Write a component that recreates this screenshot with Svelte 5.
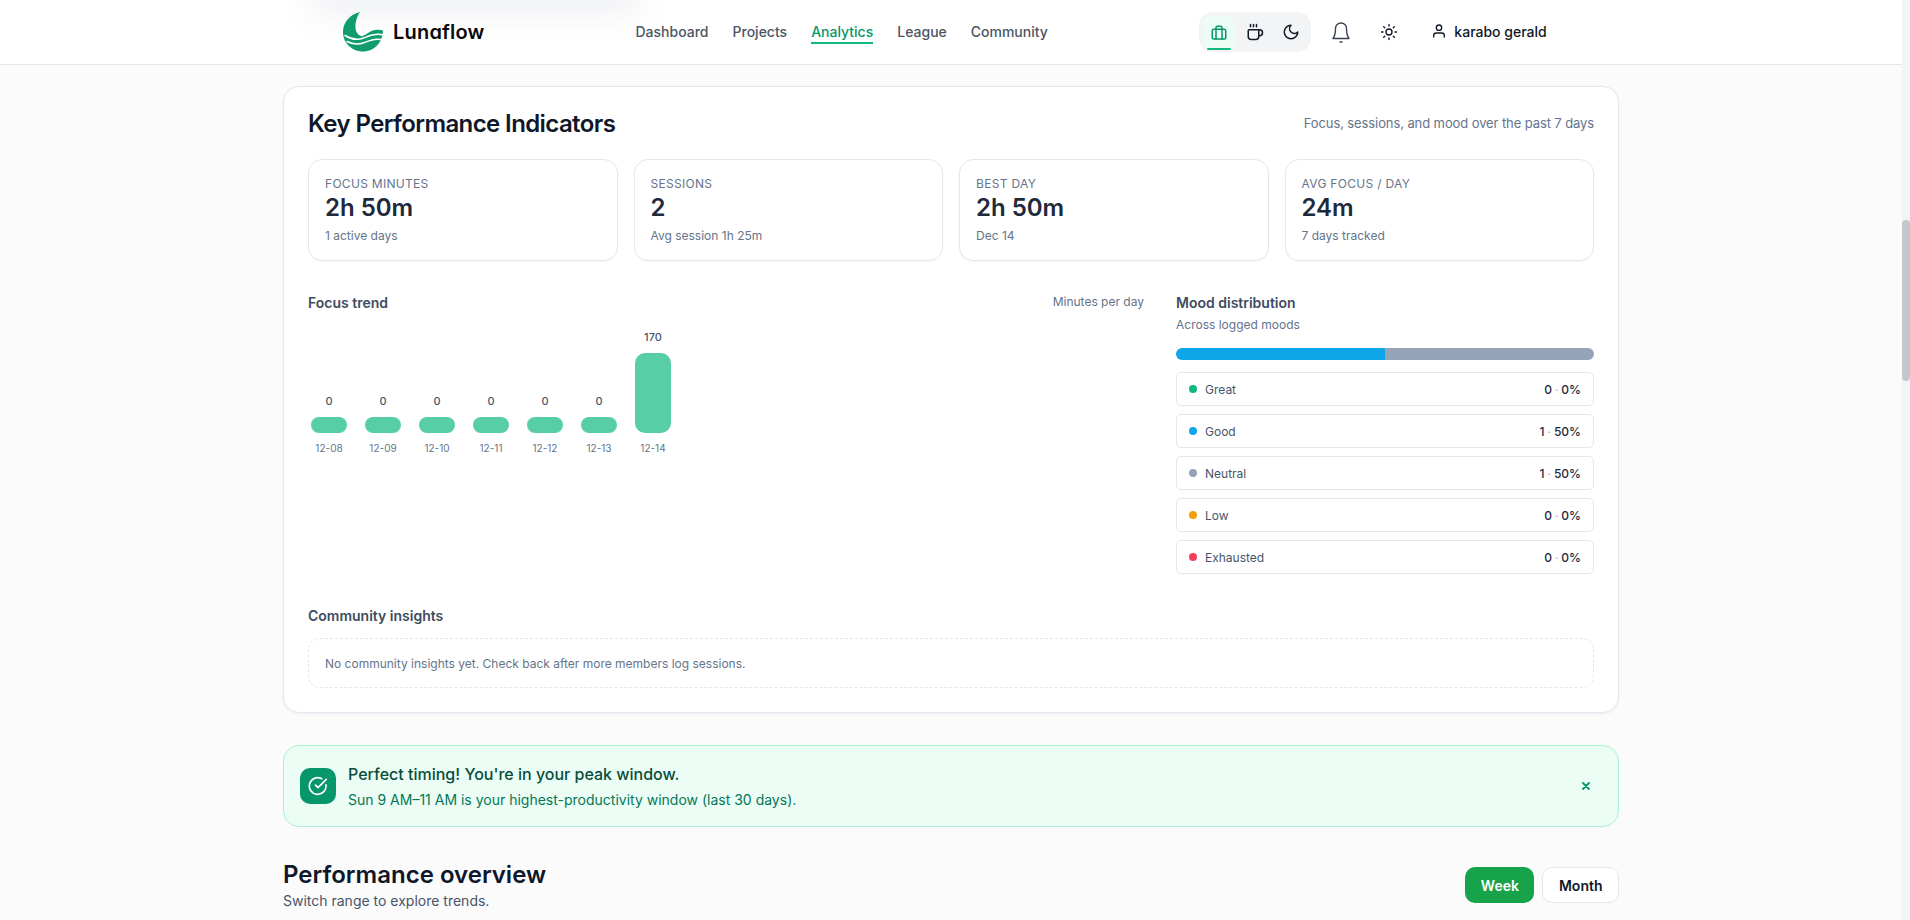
<script>
  const nav = [
    { label: 'Dashboard' },
    { label: 'Projects' },
    { label: 'Analytics', active: true },
    { label: 'League' },
    { label: 'Community' }
  ];
  const kpis = [
    { label: 'Focus minutes', value: '2h 50m', note: '1 active days' },
    { label: 'Sessions', value: '2', note: 'Avg session 1h 25m' },
    { label: 'Best day', value: '2h 50m', note: 'Dec 14' },
    { label: 'Avg focus / day', value: '24m', note: '7 days tracked' }
  ];
  const bars = [
    { day: '12-08', value: 0, h: 16 },
    { day: '12-09', value: 0, h: 16 },
    { day: '12-10', value: 0, h: 16 },
    { day: '12-11', value: 0, h: 16 },
    { day: '12-12', value: 0, h: 16 },
    { day: '12-13', value: 0, h: 16 },
    { day: '12-14', value: 170, h: 80 }
  ];
  const moods = [
    { label: 'Great', color: '#10b981', count: 0, pct: 0 },
    { label: 'Good', color: '#0ea5e9', count: 1, pct: 50 },
    { label: 'Neutral', color: '#94a3b8', count: 1, pct: 50 },
    { label: 'Low', color: '#f59e0b', count: 0, pct: 0 },
    { label: 'Exhausted', color: '#f43f5e', count: 0, pct: 0 }
  ];
</script>

<div class="shell">
  <div class="page">
    <header class="topbar">
      <div class="smudge"></div>
      <div class="topbar-inner">
        <a class="brand" href="#top">
          <svg class="logo" viewBox="0 0 40 40" aria-hidden="true">
            <path fill="#0f9d6b" d="M17 0C6.500 2.500 0 10.500 0 20c0 11 9 19.500 20 19.500 11.500 0 19.500-9 20-21-4.500-1.200-9-.8-13 1.200-2.800 1.400-5 3.500-7.800 4.600-2.300-.6-4.300-1.800-5.500-3.800C11.200 15 12.500 6.500 17 0Z"/>
            <path fill="none" stroke="#fff" stroke-width="1.500" stroke-linecap="round" d="M2 23.500c6 3.800 12.500 4.800 18.500 2.500 5.500-2.200 11-5 19-3.200"/>
            <path fill="none" stroke="#fff" stroke-width="1.500" stroke-linecap="round" d="M4 29.500c6 3 12 3.200 17.500 1 5-2 10-4.300 16-3"/>
          </svg>
          <span class="brand-name">Lunaflow</span>
        </a>
        <nav class="nav">
          {#each nav as item}
            <a class="nav-link" class:active={item.active} href="#top">{item.label}</a>
          {/each}
        </nav>
        <div class="tools">
          <div class="modes">
            <button class="mode on" aria-label="Work">
              <svg viewBox="0 0 24 24" class="ic"><rect x="3" y="7" width="18" height="13" rx="2"/><path d="M8 20V5a2 2 0 0 1 2-2h4a2 2 0 0 1 2 2v15"/></svg>
            </button>
            <button class="mode" aria-label="Break">
              <svg viewBox="0 0 24 24" class="ic"><path d="M10 2v3M14 2v3M6 2v3"/><path d="M16 9a1 1 0 0 1 1 1v8a4 4 0 0 1-4 4H7a4 4 0 0 1-4-4v-8a1 1 0 0 1 1-1h14a4 4 0 1 1 0 8h-1"/></svg>
            </button>
            <button class="mode" aria-label="Rest">
              <svg viewBox="0 0 24 24" class="ic"><path d="M12 3a6 6 0 0 0 9 9 9 9 0 1 1-9-9Z"/></svg>
            </button>
          </div>
          <button class="plain bell" aria-label="Notifications">
            <svg viewBox="0 0 24 24" class="ic"><path d="M12 2a5.500 5.500 0 0 0-5.500 5.500c0 5-1 8-2.500 10h16c-1.500-2-2.500-5-2.500-10A5.500 5.500 0 0 0 12 2Z"/><path d="M11 20.800c.6.400 1.400.4 2 0"/></svg>
          </button>
          <button class="plain sun" aria-label="Theme">
            <svg viewBox="0 0 24 24" class="ic"><circle cx="12" cy="12" r="4"/><path d="M12 2v2M12 20v2M4.900 4.900l1.400 1.400M17.700 17.700l1.400 1.400M2 12h2M20 12h2M6.300 17.700l-1.400 1.400M19.100 4.900l-1.400 1.400"/></svg>
          </button>
          <div class="user">
            <svg viewBox="0 0 24 24" class="ic"><circle cx="12" cy="7" r="4"/><path d="M20 21v-2a4 4 0 0 0-4-4H8a4 4 0 0 0-4 4v2"/></svg>
            <span>karabo gerald</span>
          </div>
        </div>
      </div>
    </header>

    <main class="content">
      <section class="panel">
        <div class="panel-head">
          <h2>Key Performance Indicators</h2>
          <p>Focus, sessions, and mood over the past 7 days</p>
        </div>

        <div class="kpis">
          {#each kpis as k}
            <article class="kpi">
              <div class="kpi-label">{k.label}</div>
              <div class="kpi-value">{k.value}</div>
              <div class="kpi-note">{k.note}</div>
            </article>
          {/each}
        </div>

        <div class="split">
          <div>
            <div class="row-between">
              <h3>Focus trend</h3>
              <span class="hint">Minutes per day</span>
            </div>
            <div class="chart">
              {#each bars as b}
                <div class="col">
                  <span class="val">{b.value}</span>
                  <div class="bar" class:tall={b.h > 16} style="height:{b.h}px"></div>
                  <span class="day">{b.day}</span>
                </div>
              {/each}
            </div>
          </div>
          <div>
            <h3>Mood distribution</h3>
            <p class="mood-sub">Across logged moods</p>
            <div class="stack"><i class="seg-a"></i><i class="seg-b"></i></div>
            <ul class="moods">
              {#each moods as m}
                <li>
                  <span class="dot" style="background:{m.color}"></span>
                  <span class="mood-name">{m.label}</span>
                  <span class="mood-num">{m.count}<em>·</em>{m.pct}%</span>
                </li>
              {/each}
            </ul>
          </div>
        </div>

        <h3>Community insights</h3>
        <div class="empty">No community insights yet. Check back after more members log sessions.</div>
      </section>

      <section class="notice">
        <div class="notice-icon">
          <svg viewBox="0 0 24 24"><path d="M21.500 10.500A10 10 0 1 1 16.500 3.300"/><path d="m9 11 3 3L22 4"/></svg>
        </div>
        <div class="notice-text">
          <strong>Perfect timing! You're in your peak window.</strong>
          <span>Sun 9 AM–11 AM is your highest-productivity window (last 30 days).</span>
        </div>
        <button class="close" aria-label="Dismiss">
          <svg viewBox="0 0 8 8"><path d="M1 1l6 6M7 1 1 7"/></svg>
        </button>
      </section>

      <section class="overview">
        <div>
          <h2>Performance overview</h2>
          <p>Switch range to explore trends.</p>
        </div>
        <div class="range">
          <button class="solid">Week</button>
          <button class="ghost">Month</button>
        </div>
      </section>
    </main>
  </div>
  <div class="scrollbar"><div class="thumb"></div></div>
</div>

<style>
  :global(body) {
    margin: 0;
    background: #fbfbfc;
    font-family: Inter, "Noto Sans", sans-serif;
    overflow: hidden;
  }
  .shell {
    display: grid;
    grid-template-columns: 1fr 8px;
    height: 920px;
    overflow: hidden;
  }
  .page { min-width: 0; background: #fbfbfc; }
  .scrollbar { background: #f3f4f6; }
  .thumb { margin-top: 220px; height: 161px; background: #c4c7cc; border-radius: 4px; }

  .topbar {
    position: relative;
    height: 64px;
    background: #fff;
    border-bottom: 1px solid #e2e8f0;
    overflow: hidden;
  }
  .smudge {
    position: absolute;
    left: 310px;
    top: -24px;
    width: 330px;
    height: 40px;
    background: #eceef1;
    filter: blur(14px);
    opacity: .7;
  }
  .topbar-inner {
    position: relative;
    display: flex;
    align-items: center;
    height: 64px;
    padding-left: 343px;
  }
  .brand {
    display: flex;
    align-items: center;
    gap: 10px;
    width: 292.500px;
    text-decoration: none;
    color: #0a0a0a;
  }
  .logo { width: 40px; height: 40px; flex: none; }
  .brand-name {
    font-size: 20px;
    font-weight: 600;
    letter-spacing: .2px;
    font-feature-settings: "cv11";
  }
  .nav { display: flex; gap: 24px; height: 64px; }
  .nav-link {
    display: block;
    box-sizing: border-box;
    height: 22px;
    margin-top: 22px;
    font-size: 14px;
    font-weight: 500;
    line-height: 20px;
    color: #4b5563;
    text-decoration: none;
  }
  .nav-link.active {
    color: #059669;
    border-bottom: 2px solid #10b981;
  }
  .tools {
    display: flex;
    align-items: center;
    margin-left: 151.500px;
  }
  .modes {
    display: flex;
    gap: 4px;
    padding: 4px;
    height: 40px;
    box-sizing: border-box;
    width: 112px;
    background: #f3f4f6;
    border-radius: 14px;
  }
  .mode {
    position: relative;
    width: 32px;
    height: 32px;
    padding: 0;
    border: 0;
    background: none;
    border-radius: 10px;
    display: grid;
    place-items: center;
    color: #111827;
  }
  .mode .ic { width: 18px; height: 18px; }
  .mode.on { background: #ecfdf5; color: #059669; height: 34px; }
  .mode.on::after {
    content: "";
    position: absolute;
    left: 4px;
    right: 4px;
    bottom: 0;
    height: 2px;
    background: #10b981;
    border-radius: 1px;
  }
  .ic {
    fill: none;
    stroke: currentColor;
    stroke-width: 2;
    stroke-linecap: round;
    stroke-linejoin: round;
  }
  .plain {
    padding: 0;
    border: 0;
    background: none;
    display: grid;
    place-items: center;
    color: #111827;
  }
  .bell { margin-left: 18px; width: 24px; height: 24px; margin-top: 1px; }
  .bell .ic { width: 24px; height: 24px; stroke-width: 1.400; color: #374151; }
  .sun { margin-left: 27px; width: 18px; height: 18px; }
  .sun .ic { width: 18px; height: 18px; stroke-width: 1.800; }
  .user {
    display: flex;
    align-items: center;
    gap: 7px;
    margin-left: 33px;
    margin-bottom: 2px;
    font-size: 14px;
    font-weight: 500;
    color: #111827;
  }
  .user .ic { width: 16px; height: 16px; }

  .content {
    width: 1336px;
    margin: 0 auto;
    padding-top: 21px;
  }
  .panel {
    box-sizing: border-box;
    height: 627px;
    padding: 24px;
    background: #fff;
    border: 1px solid #e2e8f0;
    border-radius: 16px;
    box-shadow: 0 1px 3px rgba(15, 23, 42, .05);
  }
  .panel-head {
    display: flex;
    justify-content: space-between;
    align-items: center;
    height: 24px;
    margin-bottom: 24px;
  }
  h2, h3, p, ul { margin: 0; padding: 0; }
  .panel-head h2 {
    font-size: 24px;
    font-weight: 600;
    letter-spacing: -.6px;
    color: #0f172a;
  }
  .panel-head p { font-size: 13px; letter-spacing: -.1px; color: #64748b; }
  .kpis {
    display: grid;
    grid-template-columns: repeat(4, 1fr);
    gap: 16px;
    margin-bottom: 32px;
  }
  .kpi {
    box-sizing: border-box;
    height: 102px;
    padding: 16px;
    border: 1px solid #e2e8f0;
    border-radius: 14px;
    box-shadow: 0 1px 2px rgba(15, 23, 42, .04);
  }
  .kpi-label {
    font-size: 12px;
    line-height: 16px;
    text-transform: uppercase;
    letter-spacing: .3px;
    color: #64748b;
  }
  .kpi-value {
    font-size: 24px;
    font-weight: 600;
    line-height: 32px;
    color: #1e293b;
  }
  .kpi-note {
    margin-top: 4px;
    font-size: 12px;
    line-height: 16px;
    color: #64748b;
  }
  .split {
    display: grid;
    grid-template-columns: 2fr 1fr;
    gap: 32px;
    height: 313px;
  }
  h3 {
    font-size: 14px;
    font-weight: 600;
    line-height: 20px;
    color: #3e4c60;
  }
  .row-between {
    display: flex;
    justify-content: space-between;
    align-items: flex-start;
    height: 20px;
  }
  .hint { font-size: 12px; line-height: 18px; color: #64748b; }
  .chart {
    display: flex;
    align-items: flex-end;
    gap: 14px;
    height: 140px;
    margin-top: 3px;
    padding-left: 1px;
  }
  .col {
    display: flex;
    flex-direction: column;
    align-items: center;
    width: 40px;
  }
  .val {
    font-size: 11px;
    font-weight: 500;
    line-height: 16px;
    color: #475569;
    margin-bottom: 8px;
  }
  .bar {
    width: 36px;
    background: #58cea7;
    border-radius: 8px;
  }
  .bar.tall { border-radius: 10px; }
  .day {
    margin-top: 7px;
    font-size: 10px;
    line-height: 16px;
    color: #64748b;
  }
  .mood-sub {
    margin-top: 4px;
    font-size: 12px;
    line-height: 16px;
    color: #64748b;
  }
  .stack {
    display: flex;
    height: 12px;
    margin: 15px 0 12px;
    border-radius: 6px;
    overflow: hidden;
  }
  .stack i { flex: 1; }
  .seg-a { background: #0ea5e9; }
  .seg-b { background: #94a3b8; }
  .moods {
    display: grid;
    gap: 8px;
    list-style: none;
  }
  .moods li {
    display: flex;
    align-items: center;
    gap: 8px;
    box-sizing: border-box;
    height: 34px;
    padding: 0 12px;
    border: 1px solid #e2e8f0;
    border-radius: 5px;
    font-size: 12px;
  }
  .dot { width: 8px; height: 8px; border-radius: 50%; }
  .mood-name { color: #475569; }
  .mood-num { margin-left: auto; font-weight: 500; color: #1e293b; }
  .mood-num em { font-style: normal; color: #94a3b8; margin: 0 3px; font-size: 11px; }
  .empty {
    box-sizing: border-box;
    display: flex;
    align-items: center;
    height: 50px;
    margin-top: 12px;
    padding: 0 16px;
    border: 1px dashed #e2e8f0;
    border-radius: 12px;
    font-size: 12px;
    color: #64748b;
  }
  .notice {
    display: flex;
    align-items: center;
    box-sizing: border-box;
    height: 82px;
    margin-top: 32px;
    padding: 0 16px;
    background: #ecfdf5;
    border: 1px solid #a7f3d0;
    border-radius: 16px;
  }
  .notice-icon {
    display: grid;
    place-items: center;
    width: 36px;
    height: 36px;
    background: #059669;
    border-radius: 10px;
    flex: none;
  }
  .notice-icon svg {
    width: 20px;
    height: 20px;
    fill: none;
    stroke: #fff;
    stroke-width: 2;
    stroke-linecap: round;
    stroke-linejoin: round;
  }
  .notice-text {
    display: flex;
    flex-direction: column;
    gap: 4px;
    margin-left: 12px;
  }
  .notice-text strong {
    font-size: 16px;
    font-weight: 500;
    line-height: 24px;
    color: #064e3b;
  }
  .notice-text span {
    font-size: 14px;
    line-height: 20px;
    color: #047857;
  }
  .close {
    margin-left: auto;
    margin-right: 11px;
    width: 10px;
    height: 10px;
    padding: 0;
    border: 0;
    background: none;
    display: grid;
    place-items: center;
  }
  .close svg {
    width: 8px;
    height: 8px;
    fill: none;
    stroke: #059669;
    stroke-width: 1.800;
    stroke-linecap: round;
  }
  .overview {
    display: flex;
    justify-content: space-between;
    align-items: center;
    margin-top: 32px;
  }
  .overview h2 {
    font-size: 24px;
    font-weight: 600;
    line-height: 32px;
    color: #0f172a;
  }
  .overview p {
    font-size: 14px;
    line-height: 20px;
    color: #475569;
  }
  .range { display: flex; gap: 8px; }
  .range button {
    height: 36px;
    box-sizing: border-box;
    padding: 0 15.500px;
    border-radius: 10px;
    font-family: inherit;
    font-size: 14px;
    font-weight: 600;
  }
  .solid { background: #16a34a; color: #fff; border: 0; }
  .ghost { background: #fff; color: #0f172a; border: 1px solid #e2e8f0; }
</style>
